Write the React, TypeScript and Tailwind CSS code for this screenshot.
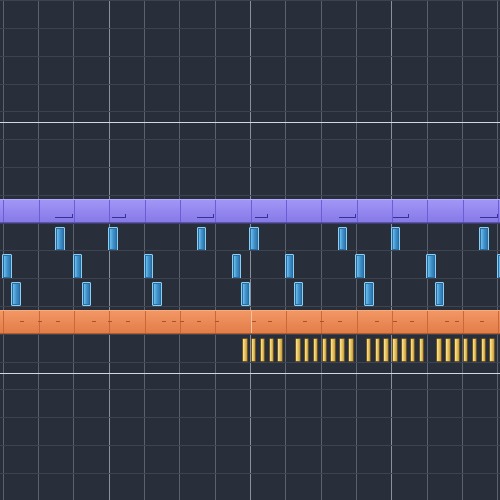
import React from "react";

// piano roll: 14 beats visible, 4 steps per beat
const BEATS = Array.from({ length: 15 }, (_, k) => k);
const LANES = Array.from({ length: 18 }, (_, j) => j);

const blueLanes: Record<number, number[]> = {
  8: [6, 12, 22, 28, 38, 44, 54],
  9: [0, 8, 16, 26, 32, 40, 48, 56],
  10: [1, 9, 17, 27, 33, 41, 49],
};

const goldSteps = [27, 28, 29, 30, 31, 33, 34, 35, 36, 37, 38, 39, 41, 42, 43, 44, 45, 46, 47, 49, 50, 51, 52, 53, 54, 55];

// mini note preview inside the purple clip: [x, width]
const purpleMarks: [number, number][] = [
  [55, 17], [112, 13], [197, 16], [255, 12], [339, 16], [393, 15], [480, 17],
];

const orangeDashes = [20, 38, 56, 92, 108, 126, 162, 172, 180, 197, 215, 252, 268, 303, 320, 338, 375, 393, 410, 445, 455, 480];

function BlueNote({ step }: { step: number }) {
  return (
    <div
      className="-ml-px h-[24.3px] w-[9.5px] rounded-[1px] border border-[#8ad0f2] bg-[#2b6ca3] p-px"
      style={{ gridColumnStart: step + 1, gridRowStart: 1 }}
    >
      <div className="h-full w-full bg-gradient-to-r from-[#6cc0ec] via-[#4394cc] to-[#3079b2]" />
    </div>
  );
}

function GoldNote({ step }: { step: number }) {
  return (
    <div
      className="ml-[0.5px] h-[24.3px] w-[5.5px] rounded-[1px] border border-[#6e5420] bg-gradient-to-r from-[#f8e79a] via-[#e7c664] to-[#c5983a]"
      style={{ gridColumnStart: step + 1, gridRowStart: 1 }}
    />
  );
}

function Clip({ kind }: { kind: "purple" | "orange" }) {
  const purple = kind === "purple";
  return (
    <div
      className={
        purple
          ? "relative mt-[3px] flex h-[24.3px] border-b border-t border-b-[#5b4fc4] border-t-[#b3a9ff] bg-gradient-to-b from-[#a196f6] to-[#8779e8] pl-[3.3px]"
          : "relative mt-[3px] flex h-[24.3px] border-b border-t border-b-[#b45b2b] border-t-[#f7ab7e] bg-gradient-to-b from-[#f29764] to-[#e27d49] pl-[3.3px]"
      }
    >
      {BEATS.map((k) => (
        <div
          key={k}
          className={
            purple
              ? "h-full w-[35.34px] shrink-0 border-l border-[#6a5dd6]"
              : k === 7
                ? "h-full w-[35.34px] shrink-0 border-l border-[#f6c3a2]"
                : "h-full w-[35.34px] shrink-0 border-l border-[#c9693a]"
          }
        />
      ))}
      {purple &&
        purpleMarks.map(([x, w], i) => (
          <div key={i} className="absolute top-[14px] flex h-[4px] items-end" style={{ left: x }}>
            <div className="h-px bg-[#36309a]" style={{ width: w }} />
            <div className="h-[4px] w-px bg-[#36309a]" />
          </div>
        ))}
      {!purple &&
        orangeDashes.map((x, i) => (
          <div key={i} className="absolute top-[10.5px] h-px w-[4px] bg-[#a9532a]" style={{ left: x }} />
        ))}
    </div>
  );
}

function Lane({ index }: { index: number }) {
  let content: React.ReactNode = null;
  if (index === 7) content = <Clip kind="purple" />;
  else if (index === 11) content = <Clip kind="orange" />;
  else if (blueLanes[index] || index === 12) {
    content = (
      <div className="grid grid-cols-[repeat(58,8.835px)] pl-[3.3px] pt-[3px]">
        {index === 12
          ? goldSteps.map((s) => <GoldNote key={s} step={s} />)
          : blueLanes[index].map((s) => <BlueNote key={s} step={s} />)}
      </div>
    );
  }
  return <div className="h-[27.8px] shrink-0 border-t border-[#3d444f]">{content}</div>;
}

export default function App() {
  return (
    <div className="relative h-[500px] w-[500px] overflow-hidden bg-[#282f3a] font-['Liberation_Sans',sans-serif]">
      {/* beat / bar lines behind everything */}
      <div className="absolute inset-0 flex pl-[2.8px]">
        {BEATS.map((k) => (
          <div
            key={k}
            className={
              k % 4 === 3
                ? "h-full w-[35.34px] shrink-0 border-l border-[#8a919b]"
                : "h-full w-[35.34px] shrink-0 border-l border-[#5b626d]"
            }
          />
        ))}
      </div>

      {/* lanes */}
      <div className="relative flex flex-col pt-[0.2px]">
        {LANES.map((j) => (
          <Lane key={j} index={j} />
        ))}
      </div>

      {/* octave separators */}
      <div className="absolute left-0 top-[121.5px] h-[1.5px] w-full bg-[#d4d8de]" />
      <div className="absolute left-0 top-[372.5px] h-[1.5px] w-full bg-[#d4d8de]" />
    </div>
  );
}
